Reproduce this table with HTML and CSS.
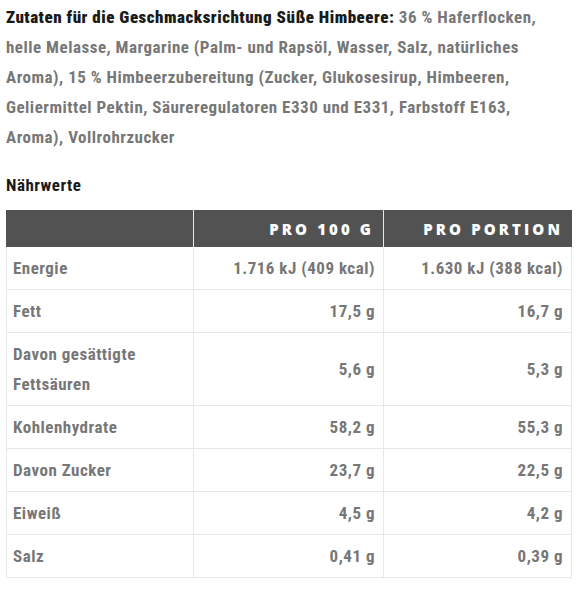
FILE: index.html
```html
<!DOCTYPE html>
<html lang="de">
<head>
    <meta charset="UTF-8">
    <title>Nährwerte</title>
    <link rel="stylesheet" href="styles.css">
</head>
<body>
    <div class="product-info">
        <p class="ingredients"><strong>Zutaten für die Geschmacksrichtung Süße Himbeere:</strong> 36 % Haferflocken, helle Melasse, Margarine (Palm- und Rapsöl, Wasser, Salz, natürliches Aroma), 15 % Himbeerzubereitung (Zucker, Glukosesirup, Himbeeren, Geliermittel Pektin, Säureregulatoren E330 und E331, Farbstoff E163, Aroma), Vollrohrzucker</p>

        <h4>Nährwerte</h4>

        <table class="nutrition">
            <colgroup>
                <col class="col-label">
                <col class="col-100g">
                <col>
            </colgroup>
            <thead>
                <tr>
                    <th></th>
                    <th>Pro 100 g</th>
                    <th>Pro Portion</th>
                </tr>
            </thead>
            <tbody>
                <tr><td>Energie</td><td>1.716 kJ (409 kcal)</td><td>1.630 kJ (388 kcal)</td></tr>
                <tr><td>Fett</td><td>17,5 g</td><td>16,7 g</td></tr>
                <tr class="tall"><td>Davon gesättigte Fettsäuren</td><td>5,6 g</td><td>5,3 g</td></tr>
                <tr><td>Kohlenhydrate</td><td>58,2 g</td><td>55,3 g</td></tr>
                <tr><td>Davon Zucker</td><td>23,7 g</td><td>22,5 g</td></tr>
                <tr><td>Eiweiß</td><td>4,5 g</td><td>4,2 g</td></tr>
                <tr><td>Salz</td><td>0,41 g</td><td>0,39 g</td></tr>
            </tbody>
        </table>
    </div>
</body>
</html>
```

FILE: styles.css
```css
body {
    margin: 0;
    padding: 0 9px 0 6px;
    background-color: #fff;
    font-family: 'Roboto', 'Liberation Sans', sans-serif;
    font-stretch: condensed;
    font-weight: bold;
    font-size: 17px;
    letter-spacing: 0.5px;
    color: #777;
}

.ingredients {
    margin: 2px 0 0;
    line-height: 30px;
}

.ingredients strong {
    color: #1a1a1a;
}

h4 {
    margin: 18px 0 0;
    font-size: 17px;
    line-height: 30px;
    color: #1a1a1a;
}

.nutrition {
    width: 566px;
    margin-top: 10px;
    border-collapse: separate;
    border-spacing: 0;
    table-layout: fixed;
}

.col-label {
    width: 188px;
}

.col-100g {
    width: 190px;
}

.nutrition th {
    height: 37px;
    padding: 0 9px 0 0;
    background-color: #525252;
    color: #fff;
    font-family: 'Open Sans', 'DejaVu Sans', sans-serif;
    font-stretch: normal;
    font-size: 15px;
    font-weight: 800;
    letter-spacing: 3.1px;
    text-transform: uppercase;
    text-align: right;
    border-right: 1px solid #e8e8e8;
    box-sizing: border-box;
}

.nutrition th:last-child {
    border-right: none;
}

.nutrition td {
    height: 43px;
    padding: 0 8px 0 6px;
    border-right: 1px solid #e8e8e8;
    border-bottom: 1px solid #e8e8e8;
    text-align: right;
    line-height: 30px;
    box-sizing: border-box;
}

.nutrition td:first-child {
    border-left: 1px solid #e8e8e8;
    padding-right: 50px;
    text-align: left;
}

.nutrition tr.tall td {
    height: 73px;
    padding-top: 6px;
    padding-bottom: 6px;
}
```
